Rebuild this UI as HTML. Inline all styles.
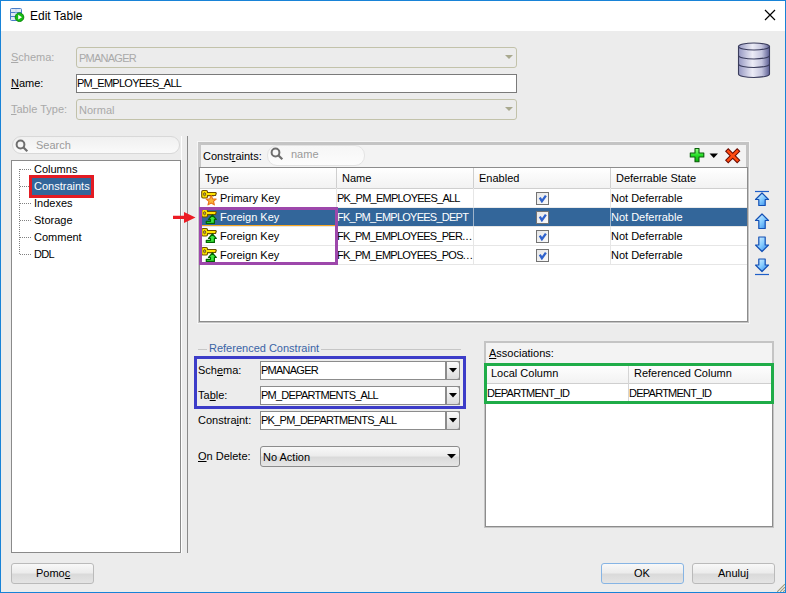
<!DOCTYPE html>
<html><head><meta charset="utf-8">
<style>
*{box-sizing:border-box;margin:0;padding:0}
html,body{width:786px;height:593px;overflow:hidden;background:#ececec}
body{position:relative;font-family:"Liberation Sans",sans-serif;font-size:11px;color:#000}
.a{position:absolute}
.t{position:absolute;white-space:nowrap;line-height:13px}
.caps{letter-spacing:-0.75px}
.dots{letter-spacing:0.4px}
.u{text-decoration:underline}
#win{left:0;top:0;width:786px;height:593px;border:1px solid #1883d7;background:#ececec}
#title{left:1px;top:1px;width:784px;height:30px;background:#fff}
.combo-dis{border:1px solid #c2c2aa;border-radius:3px;background:#ececec}
.field{border:1px solid #7a7a7a;background:#fff}
.box{border:1px solid #8a8a8a;background:#fff}
.gray{color:#a9a9a9}
.sel{background:#33669a;color:#fff}
.btn{border:1px solid #bababa;border-radius:3px;background:linear-gradient(#f8f8f8,#ececec 45%,#dadada 55%,#e4e4e4)}
</style></head><body>
<div id="win" class="a"></div>
<div id="title" class="a"></div>
<!-- title icon -->
<svg class="a" style="left:10px;top:8px" width="17" height="16" viewBox="0 0 17 16">
<rect x="0.5" y="0.5" width="11" height="12" rx="1" fill="#dfe8f5" stroke="#4a7ec8"/>
<line x1="1" y1="4.5" x2="11" y2="4.5" stroke="#4a7ec8"/><line x1="6" y1="1" x2="6" y2="12" stroke="#c0d0ea"/>
<line x1="1" y1="8.5" x2="11" y2="8.5" stroke="#4a7ec8"/>
<circle cx="9.5" cy="9.2" r="4.3" fill="#14bc14" stroke="#0e8a0e"/>
<path d="M8.2 6.8 L12 9.2 L8.2 11.6 Z" fill="#fff"/>
</svg>
<div class="t" style="left:30px;top:9px;font-size:12px;line-height:14px">Edit Table</div>
<svg class="a" style="left:764px;top:9px" width="12" height="12" viewBox="0 0 12 12"><path d="M1 1L11 11M11 1L1 11" stroke="#000" stroke-width="1.2"/></svg>

<!-- top form -->
<div class="t gray" style="left:11px;top:51px"><span class="u">S</span>chema:</div>
<div class="a combo-dis" style="left:76px;top:47px;width:441px;height:21px"></div>
<div class="t gray caps" style="left:79px;top:52px">PMANAGER</div>
<svg class="a" style="left:505px;top:55px" width="8" height="5"><path d="M0 0H8L4 4Z" fill="#a9a98f"/></svg>

<div class="t" style="left:11px;top:77px"><span class="u">N</span>ame:</div>
<div class="a field" style="left:76px;top:74px;width:441px;height:19px"></div>
<div class="t caps" style="left:77px;top:77px">PM_EMPLOYEES_ALL</div>

<div class="t gray" style="left:11px;top:103px"><span class="u">T</span>able Type:</div>
<div class="a combo-dis" style="left:76px;top:99px;width:441px;height:21px"></div>
<div class="t gray" style="left:79px;top:104px">Normal</div>
<svg class="a" style="left:505px;top:107px" width="8" height="5"><path d="M0 0H8L4 4Z" fill="#a9a98f"/></svg>

<!-- db icon -->
<svg class="a" style="left:736px;top:40px" width="36" height="40" viewBox="0 0 36 40">
<defs><linearGradient id="dbg" x1="0" x2="1"><stop offset="0" stop-color="#9597c2"/><stop offset=".45" stop-color="#ececf6"/><stop offset=".75" stop-color="#c4c5de"/><stop offset="1" stop-color="#5d5f94"/></linearGradient></defs>
<path d="M2.5 6.5 V34 A15.5 3.5 0 0 0 33.5 34 V6.5 Z" fill="url(#dbg)" stroke="#3a3c5c" stroke-width="1.1"/>
<ellipse cx="18" cy="6.5" rx="15.5" ry="3.5" fill="url(#dbg)" stroke="#3a3c5c" stroke-width="1.1"/>
<path d="M2.5 15.5 A15.5 3.5 0 0 0 33.5 15.5 M2.5 24 A15.5 3.5 0 0 0 33.5 24" fill="none" stroke="#3a3c5c" stroke-width="1.1"/>
</svg>

<!-- left: search + tree -->
<div class="a" style="left:12px;top:136px;width:168px;height:18px;border:1px solid #d8d8d8;border-radius:9px;background:linear-gradient(#f0f0f0,#fafafa)"></div>
<svg class="a" style="left:15px;top:139px" width="14" height="14" viewBox="0 0 14 14"><circle cx="5.5" cy="5.5" r="3.9" fill="none" stroke="#6e6e6e" stroke-width="2"/><path d="M8.3 8.3L12.3 12.3" stroke="#6e6e6e" stroke-width="2.2"/></svg>
<div class="t" style="left:36px;top:139px;color:#9a9a9a">Search</div>
<div class="a box" style="left:11px;top:160px;width:170px;height:393px"></div>
<!-- tree lines -->
<div class="a" style="left:19px;top:169px;width:0;height:85px;border-left:1px dotted #808080"></div>
<div class="a" style="left:20px;top:169px;width:11px;border-top:1px dotted #808080"></div>
<div class="a" style="left:20px;top:186px;width:11px;border-top:1px dotted #808080"></div>
<div class="a" style="left:20px;top:203px;width:11px;border-top:1px dotted #808080"></div>
<div class="a" style="left:20px;top:220px;width:11px;border-top:1px dotted #808080"></div>
<div class="a" style="left:20px;top:237px;width:11px;border-top:1px dotted #808080"></div>
<div class="a" style="left:20px;top:254px;width:11px;border-top:1px dotted #808080"></div>
<div class="t" style="left:34px;top:163px">Columns</div>
<div class="a" style="left:29px;top:175px;width:65px;height:23px;border:3px solid #e31b23;background:#33669a"></div>
<div class="t" style="left:34px;top:180px;color:#fff">Constraints</div>
<div class="t" style="left:34px;top:197px">Indexes</div>
<div class="t" style="left:34px;top:214px">Storage</div>
<div class="t" style="left:34px;top:231px">Comment</div>
<div class="t caps" style="left:34px;top:248px">DDL</div>

<!-- splitter -->
<div class="a" style="left:187px;top:136px;width:1px;height:417px;background:#8a8a8a"></div>
<div class="a" style="left:181px;top:136px;width:1px;height:417px;background:#fff"></div>

<!-- constraints panel -->
<div class="a" style="left:197px;top:141px;width:553px;height:183px;border:1px solid #f6f6f6"></div>
<div class="a" style="left:198px;top:142px;width:551px;height:181px;border:3px solid #c4c4c4;border-left-color:#c8c8c8;background:#f3f3f3"></div>
<div class="a" style="left:199px;top:167px;width:549px;height:155px;border:1px solid #8c8c8c;background:#fff"></div>
<div class="t" style="left:203px;top:150px">Const<span class="u">r</span>aints:</div>
<div class="a" style="left:267px;top:145px;width:98px;height:21px;border:1px solid #e4e4e4;border-radius:10px;background:linear-gradient(#f6f6f6,#fcfcfc)"></div>
<svg class="a" style="left:270px;top:147px" width="14" height="14" viewBox="0 0 14 14"><circle cx="5.5" cy="5.5" r="3.9" fill="none" stroke="#6e6e6e" stroke-width="2"/><path d="M8.3 8.3L12.3 12.3" stroke="#6e6e6e" stroke-width="2.2"/></svg>
<div class="t" style="left:291px;top:148px;color:#9a9a9a">name</div>
<!-- add / delete -->
<svg class="a" style="left:689px;top:147px" width="18" height="18" viewBox="0 0 18 18">
<defs><linearGradient id="pg" x1="0" y1="0" x2="0" y2="1"><stop offset="0" stop-color="#9cff8c"/><stop offset=".5" stop-color="#28e028"/><stop offset="1" stop-color="#0cae0c"/></linearGradient></defs>
<path d="M6 1.5H10V6H14.8V10H10V14.8H6V10H1.3V6H6Z" fill="url(#pg)" stroke="#0a5e0a" stroke-width="1.1" stroke-linejoin="round"/>
</svg>
<svg class="a" style="left:709px;top:153px" width="10" height="6"><path d="M0.5 0.5H9L4.75 5Z" fill="#000"/></svg>
<svg class="a" style="left:723px;top:146px" width="19" height="19" viewBox="0 0 19 19">
<path d="M3.6 3.6L15.8 15.8M15.8 3.6L3.6 15.8" stroke="#6a0a00" stroke-width="4.6"/>
<path d="M4.3 4.3L15.1 15.1M15.1 4.3L4.3 15.1" stroke="#ff4a10" stroke-width="2.6"/>
</svg>

<!-- table header -->
<div class="a" style="left:200px;top:168px;width:547px;height:21px;background:linear-gradient(#fff,#f2f2f2);border-bottom:1px solid #cfcfcf"></div>
<div class="a" style="left:336px;top:168px;width:1px;height:20px;background:#cfcfcf"></div>
<div class="a" style="left:473px;top:168px;width:1px;height:20px;background:#cfcfcf"></div>
<div class="a" style="left:610px;top:168px;width:1px;height:20px;background:#cfcfcf"></div>
<div class="t" style="left:205px;top:172px">Type</div>
<div class="t" style="left:342px;top:172px">Name</div>
<div class="t" style="left:479px;top:172px">Enabled</div>
<div class="t" style="left:616px;top:172px">Deferrable State</div>

<!-- rows -->
<div class="a sel" style="left:200px;top:208px;width:547px;height:18px"></div>
<div class="a" style="left:200px;top:207px;width:547px;height:1px;background:#ebebeb"></div>
<div class="a" style="left:200px;top:226px;width:547px;height:1px;background:#e6e6e6"></div>
<div class="a" style="left:200px;top:245px;width:547px;height:1px;background:#e6e6e6"></div>
<div class="a" style="left:200px;top:264px;width:547px;height:1px;background:#e6e6e6"></div>
<div class="a" style="left:336px;top:188px;width:1px;height:76px;background:#e6e6e6"></div>
<div class="a" style="left:473px;top:188px;width:1px;height:76px;background:#e6e6e6"></div>
<div class="a" style="left:610px;top:188px;width:1px;height:76px;background:#e6e6e6"></div>
<div class="a" style="left:473px;top:208px;width:1px;height:18px;background:#9fb4cb"></div>
<div class="a" style="left:610px;top:208px;width:1px;height:18px;background:#9fb4cb"></div>
<div class="a" style="left:200px;top:225px;width:137px;height:1px;background:#f5a623"></div>

<div class="t" style="left:220px;top:192px">Primary Key</div>
<div class="t caps" style="left:337px;top:192px">PK_PM_EMPLOYEES_ALL</div>
<div class="t" style="left:611px;top:192px">Not Deferrable</div>
<div class="t" style="left:220px;top:211px;color:#fff">Foreign Key</div>
<div class="t caps" style="left:337px;top:211px;color:#fff">FK_PM_EMPLOYEES_DEPT</div>
<div class="t" style="left:611px;top:211px;color:#fff">Not Deferrable</div>
<div class="t" style="left:220px;top:230px">Foreign Key</div>
<div class="t caps" style="left:337px;top:230px">FK_PM_EMPLOYEES_PER<span class="dots">...</span></div>
<div class="t" style="left:611px;top:230px">Not Deferrable</div>
<div class="t" style="left:220px;top:249px">Foreign Key</div>
<div class="t caps" style="left:337px;top:249px">FK_PM_EMPLOYEES_POS<span class="dots">...</span></div>
<div class="t" style="left:611px;top:249px">Not Deferrable</div>

<!-- checkboxes -->
<div class="a" style="left:536px;top:192px;width:13px;height:13px;border:1px solid #737373;background:linear-gradient(135deg,#e6e6e6,#fafafa)"></div>
<svg class="a" style="left:538px;top:194px" width="10" height="9" viewBox="0 0 10 9"><path d="M1.8 3.6L3.9 7.2L7.9 1.6" fill="none" stroke="#2f62cc" stroke-width="2.3"/></svg>
<div class="a" style="left:536px;top:211px;width:13px;height:13px;border:1px solid #737373;background:linear-gradient(135deg,#e6e6e6,#fafafa)"></div>
<svg class="a" style="left:538px;top:213px" width="10" height="9" viewBox="0 0 10 9"><path d="M1.8 3.6L3.9 7.2L7.9 1.6" fill="none" stroke="#2f62cc" stroke-width="2.3"/></svg>
<div class="a" style="left:536px;top:230px;width:13px;height:13px;border:1px solid #737373;background:linear-gradient(135deg,#e6e6e6,#fafafa)"></div>
<svg class="a" style="left:538px;top:232px" width="10" height="9" viewBox="0 0 10 9"><path d="M1.8 3.6L3.9 7.2L7.9 1.6" fill="none" stroke="#2f62cc" stroke-width="2.3"/></svg>
<div class="a" style="left:536px;top:249px;width:13px;height:13px;border:1px solid #737373;background:linear-gradient(135deg,#e6e6e6,#fafafa)"></div>
<svg class="a" style="left:538px;top:251px" width="10" height="9" viewBox="0 0 10 9"><path d="M1.8 3.6L3.9 7.2L7.9 1.6" fill="none" stroke="#2f62cc" stroke-width="2.3"/></svg>
<svg class="a" style="left:201px;top:189px" width="17" height="17" viewBox="0 0 17 17">
<path d="M2 1.5H5.2Q6.5 1.5 6.5 3V3.5H14.5L15.3 4.2L14.5 6.5H6.5V7.5Q6.5 9 5.2 9H2Q0.7 9 0.7 7.5V3Q0.7 1.5 2 1.5Z" fill="#ffe400" stroke="#6e4e00" stroke-width="1.1" stroke-linejoin="round"/>
<ellipse cx="3.6" cy="5.2" rx="1.1" ry="1.6" fill="#b0a060" stroke="#6e4e00" stroke-width=".8"/>
<path d="M8 6.8V7.6M10 6.8V7.6M12 6.8V7.6" stroke="#8a6a10" stroke-width="1"/>
<path d="M10.2 6.6L11.7 9.9L15.2 10.1L12.5 12.4L13.4 15.9L10.2 14L7 15.9L7.9 12.4L5.2 10.1L8.7 9.9Z" fill="#f9b43a" stroke="#e8741a" stroke-width="1.1" stroke-linejoin="round"/></svg><svg class="a" style="left:201px;top:208px" width="17" height="17" viewBox="0 0 17 17">
<path d="M2 1.5H5.2Q6.5 1.5 6.5 3V3.5H14.5L15.3 4.2L14.5 6.5H6.5V7.5Q6.5 9 5.2 9H2Q0.7 9 0.7 7.5V3Q0.7 1.5 2 1.5Z" fill="#ffe400" stroke="#6e4e00" stroke-width="1.1" stroke-linejoin="round"/>
<ellipse cx="3.6" cy="5.2" rx="1.1" ry="1.6" fill="#b0a060" stroke="#6e4e00" stroke-width=".8"/>
<path d="M8 6.8V7.6M10 6.8V7.6M12 6.8V7.6" stroke="#8a6a10" stroke-width="1"/>
<path d="M11.4 7L15.3 11.5H13.4V15.4H5.3V13.3H9.5V11.5H7.5Z" fill="#3ee83e" stroke="#006400" stroke-width="1.2" stroke-linejoin="round"/></svg><svg class="a" style="left:201px;top:227px" width="17" height="17" viewBox="0 0 17 17">
<path d="M2 1.5H5.2Q6.5 1.5 6.5 3V3.5H14.5L15.3 4.2L14.5 6.5H6.5V7.5Q6.5 9 5.2 9H2Q0.7 9 0.7 7.5V3Q0.7 1.5 2 1.5Z" fill="#ffe400" stroke="#6e4e00" stroke-width="1.1" stroke-linejoin="round"/>
<ellipse cx="3.6" cy="5.2" rx="1.1" ry="1.6" fill="#b0a060" stroke="#6e4e00" stroke-width=".8"/>
<path d="M8 6.8V7.6M10 6.8V7.6M12 6.8V7.6" stroke="#8a6a10" stroke-width="1"/>
<path d="M11.4 7L15.3 11.5H13.4V15.4H5.3V13.3H9.5V11.5H7.5Z" fill="#3ee83e" stroke="#006400" stroke-width="1.2" stroke-linejoin="round"/></svg><svg class="a" style="left:201px;top:246px" width="17" height="17" viewBox="0 0 17 17">
<path d="M2 1.5H5.2Q6.5 1.5 6.5 3V3.5H14.5L15.3 4.2L14.5 6.5H6.5V7.5Q6.5 9 5.2 9H2Q0.7 9 0.7 7.5V3Q0.7 1.5 2 1.5Z" fill="#ffe400" stroke="#6e4e00" stroke-width="1.1" stroke-linejoin="round"/>
<ellipse cx="3.6" cy="5.2" rx="1.1" ry="1.6" fill="#b0a060" stroke="#6e4e00" stroke-width=".8"/>
<path d="M8 6.8V7.6M10 6.8V7.6M12 6.8V7.6" stroke="#8a6a10" stroke-width="1"/>
<path d="M11.4 7L15.3 11.5H13.4V15.4H5.3V13.3H9.5V11.5H7.5Z" fill="#3ee83e" stroke="#006400" stroke-width="1.2" stroke-linejoin="round"/></svg>

<!-- purple box -->
<div class="a" style="left:199px;top:207px;width:139px;height:58px;border:3px solid #9d47ab"></div>

<!-- red arrow -->
<svg class="a" style="left:172px;top:211px" width="25" height="14" viewBox="0 0 25 14"><path d="M1 4.7H12V0.9L23.5 6.5L12 12.1V8.1H1Z" fill="#ec1c24"/></svg>

<!-- move buttons -->
<svg class="a" style="left:752px;top:189px" width="20" height="90" viewBox="0 0 20 90">
<defs><linearGradient id="ag" x1="0" y1="0" x2="1" y2="1"><stop offset="0" stop-color="#e4f6ff"/><stop offset=".5" stop-color="#86ccff"/><stop offset="1" stop-color="#2a84e8"/></linearGradient></defs>
<line x1="3" y1="2.5" x2="17" y2="2.5" stroke="#1f5fc8" stroke-width="1.2"/>
<path d="M10 4L16.5 10.5H13.2V16.5H6.8V10.5H3.5Z" fill="url(#ag)" stroke="#1450b4" stroke-width="1.2" stroke-linejoin="round"/>
<path d="M10 25L16.5 31.5H13.2V39.5H6.8V31.5H3.5Z" fill="url(#ag)" stroke="#1450b4" stroke-width="1.2" stroke-linejoin="round"/>
<path d="M10 62.5L16.5 56H13.2V48H6.8V56H3.5Z" fill="url(#ag)" stroke="#1450b4" stroke-width="1.2" stroke-linejoin="round"/>
<path d="M10 82.5L16.5 76H13.2V70H6.8V76H3.5Z" fill="url(#ag)" stroke="#1450b4" stroke-width="1.2" stroke-linejoin="round"/>
<line x1="3" y1="85.5" x2="17" y2="85.5" stroke="#1f5fc8" stroke-width="1.2"/>
</svg>

<!-- referenced constraint -->
<div class="a" style="left:198px;top:349px;width:263px;height:1px;background:#c6c6c6"></div>
<div class="t" style="left:207px;top:342px;color:#3a64a6;background:#ececec;padding:0 2px">Referenced Constraint</div>
<div class="t" style="left:198px;top:364px">Sch<span class="u">e</span>ma:</div>
<div class="a" style="left:260px;top:361px;width:200px;height:19px;border:1px solid #8c8c8c;background:#fff"></div>
<div class="a" style="left:445px;top:361px;width:15px;height:19px;border:1px solid #8c8c8c;border-left:2px solid #8c8c8c;border-radius:0 3px 3px 0;background:linear-gradient(#fbfbfb,#ececec 50%,#dcdcdc)"></div>
<svg class="a" style="left:449px;top:368px" width="8" height="5"><path d="M0 0H8L4 4.5Z" fill="#000"/></svg>
<div class="t caps" style="left:261px;top:364px">PMANAGER</div>
<div class="t" style="left:198px;top:389px">Ta<span class="u">b</span>le:</div>
<div class="a" style="left:260px;top:386px;width:200px;height:19px;border:1px solid #8c8c8c;background:#fff"></div>
<div class="a" style="left:445px;top:386px;width:15px;height:19px;border:1px solid #8c8c8c;border-left:2px solid #8c8c8c;border-radius:0 3px 3px 0;background:linear-gradient(#fbfbfb,#ececec 50%,#dcdcdc)"></div>
<svg class="a" style="left:449px;top:393px" width="8" height="5"><path d="M0 0H8L4 4.5Z" fill="#000"/></svg>
<div class="t caps" style="left:261px;top:389px">PM_DEPARTMENTS_ALL</div>
<div class="t" style="left:198px;top:414px">Constra<span class="u">i</span>nt:</div>
<div class="a" style="left:260px;top:411px;width:200px;height:19px;border:1px solid #8c8c8c;background:#fff"></div>
<div class="a" style="left:445px;top:411px;width:15px;height:19px;border:1px solid #8c8c8c;border-left:2px solid #8c8c8c;border-radius:0 3px 3px 0;background:linear-gradient(#fbfbfb,#ececec 50%,#dcdcdc)"></div>
<svg class="a" style="left:449px;top:418px" width="8" height="5"><path d="M0 0H8L4 4.5Z" fill="#000"/></svg>
<div class="t caps" style="left:261px;top:414px">PK_PM_DEPARTMENTS_ALL</div>
<div class="a" style="left:194px;top:356px;width:272px;height:53px;border:3px solid #3c3cc8"></div>
<div class="t" style="left:198px;top:450px"><span class="u">O</span>n Delete:</div>
<div class="a" style="left:260px;top:446px;width:200px;height:21px;border:1px solid #8c8c8c;border-radius:3px;background:linear-gradient(#f8f8f8,#ececec 45%,#dadada 55%,#e6e6e6)"></div>
<div class="t" style="left:263px;top:451px">No Action</div>
<svg class="a" style="left:447px;top:454px" width="10" height="5"><path d="M0 0H9L4.5 4.5Z" fill="#000"/></svg>

<!-- associations -->
<div class="a" style="left:484px;top:341px;width:290px;height:187px;border:2px solid #c4c4c4;background:#f3f3f3"></div>
<div class="a" style="left:485px;top:363px;width:288px;height:164px;border:1px solid #8c8c8c;background:#fff"></div>
<div class="t" style="left:489px;top:347px"><span class="u">A</span>ssociations:</div>
<div class="a" style="left:486px;top:364px;width:286px;height:20px;background:linear-gradient(#fff,#f2f2f2);border-bottom:1px solid #cfcfcf"></div>
<div class="a" style="left:628px;top:364px;width:1px;height:39px;background:#d5d5d5"></div>
<div class="t" style="left:491px;top:367px">Local Column</div>
<div class="t" style="left:634px;top:367px">Referenced Column</div>
<div class="t caps" style="left:487px;top:387px">DEPARTMENT_ID</div>
<div class="t caps" style="left:629px;top:387px">DEPARTMENT_ID</div>
<div class="a" style="left:484px;top:363px;width:290px;height:41px;border:3px solid #1fac48"></div>

<!-- buttons -->
<div class="a btn" style="left:11px;top:563px;width:83px;height:21px"></div>
<div class="t" style="left:36px;top:567px">Pomo<span class="u">c</span></div>
<div class="a btn" style="left:601px;top:563px;width:83px;height:21px;border-color:#86b4e4"></div>
<div class="t" style="left:634px;top:567px">OK</div>
<div class="a btn" style="left:692px;top:563px;width:83px;height:21px"></div>
<div class="t" style="left:718px;top:567px">Anuluj</div>
<svg class="a" style="left:774px;top:581px" width="11" height="11" viewBox="0 0 11 11"><path d="M11 2L2 11M11 5L5 11M11 8L8 11" stroke="#fff" stroke-width="1"/><path d="M11 3L3 11M11 6L6 11M11 9L9 11" stroke="#a09c80" stroke-width="1.1"/></svg>
</body></html>
